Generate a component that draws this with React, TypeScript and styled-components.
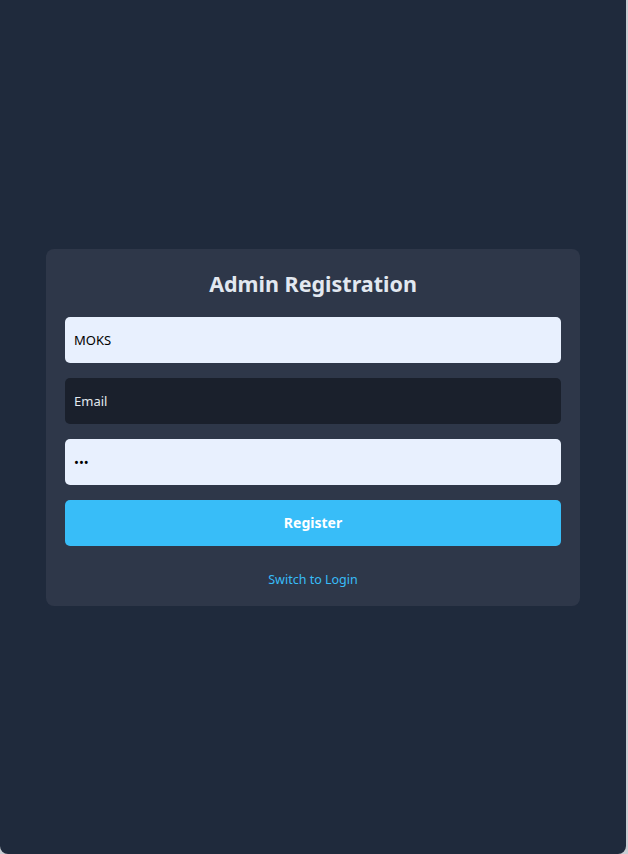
import styled, { createGlobalStyle } from 'styled-components';

const GlobalStyle = createGlobalStyle`
  html, body {
    margin: 0;
    padding: 0;
    background: #c9cdd3;
  }
  * {
    box-sizing: border-box;
  }
`;

function App() {
  return (
    <>
      <GlobalStyle />
      <Page>
        <Card>
          <Title>Admin Registration</Title>
          <Input type="text" defaultValue="MOKS" $autofill />
          <Input type="email" placeholder="Email" />
          <Input type="password" defaultValue="123" $autofill />
          <SubmitBtn>Register</SubmitBtn>
          <SwitchLink>Switch to Login</SwitchLink>
        </Card>
      </Page>
    </>
  );
}

export default App;

const Page = styled.div`
  display: flex;
  align-items: center;
  justify-content: center;
  width: 626px;
  height: 854px;
  background-color: #1f2a3c;
  border-bottom-left-radius: 8px;
  border-bottom-right-radius: 8px;
  font-family: 'Noto Sans', 'Open Sans', sans-serif;
`;

const Card = styled.div`
  display: flex;
  flex-direction: column;
  width: 534px;
  padding: 20px 19px 17px;
  border-radius: 8px;
  background-color: #2e3749;
`;

const Title = styled.h2`
  margin: 0 0 19px;
  font-size: 21.5px;
  line-height: 29px;
  font-weight: 700;
  text-align: center;
  color: #e2e8f0;
`;

const Input = styled.input<{ $autofill?: boolean }>`
  height: 46px;
  margin-bottom: 15px;
  padding: 0 9px;
  border: none;
  border-radius: 5px;
  outline: none;
  font-family: inherit;
  font-size: 13px;
  color: ${props => (props.$autofill ? '#000000' : '#e2e8f0')};
  background-color: ${props => (props.$autofill ? '#e8f0fe' : '#1a202c')};

  &::placeholder {
    color: #e2e8f0;
  }
`;

const SubmitBtn = styled.button`
  height: 46px;
  border: none;
  border-radius: 5px;
  font-family: inherit;
  font-size: 14px;
  font-weight: 700;
  color: #ffffff;
  background-color: #38bdf8;
  cursor: pointer;
`;

const SwitchLink = styled.p`
  margin: 24px 0 0;
  font-size: 12.5px;
  line-height: 19px;
  text-align: center;
  color: #38bdf8;
  cursor: pointer;
`;
